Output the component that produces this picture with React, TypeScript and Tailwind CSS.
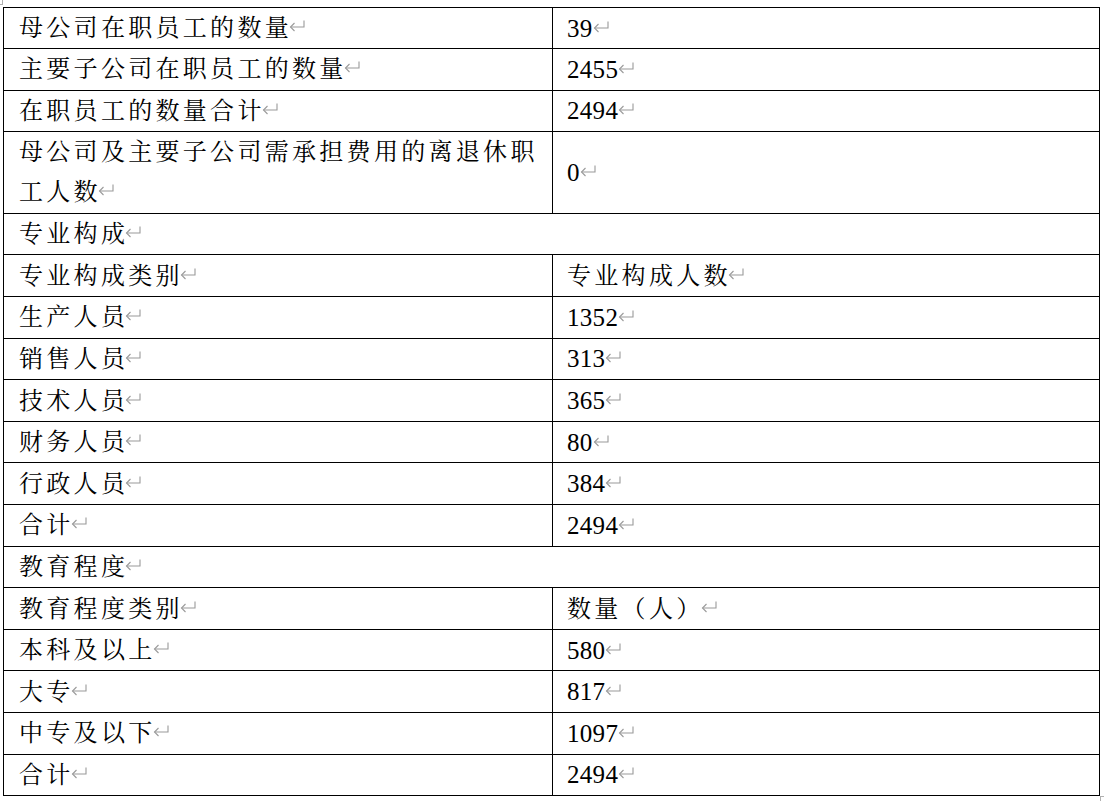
import React from "react";

const Ret = () => (
  <svg width="17" height="12" viewBox="0 0 17 12" className="inline-block ml-[-3px] align-[4px]" fill="none" stroke="#9a9a9a" strokeWidth="1.1">
    <path d="M15 0.5 V7 H1.5" />
    <path d="M5.5 3 L1.5 7 L5.5 11" />
  </svg>
);

const Zh = ({ children }: { children: React.ReactNode }) => (
  <span className="tracking-[3.3px]">{children}</span>
);
const Num = ({ children }: { children: React.ReactNode }) => (
  <span className="text-[25px] tracking-[0.3px] mr-[3px]">{children}</span>
);

type Row = { l: string; r?: string; span?: boolean; rNum?: boolean };

const rows: Row[] = [
  { l: "母公司在职员工的数量", r: "39", rNum: true },
  { l: "主要子公司在职员工的数量", r: "2455", rNum: true },
  { l: "在职员工的数量合计", r: "2494", rNum: true },
  { l: "__double__", r: "0", rNum: true },
  { l: "专业构成", span: true },
  { l: "专业构成类别", r: "专业构成人数" },
  { l: "生产人员", r: "1352", rNum: true },
  { l: "销售人员", r: "313", rNum: true },
  { l: "技术人员", r: "365", rNum: true },
  { l: "财务人员", r: "80", rNum: true },
  { l: "行政人员", r: "384", rNum: true },
  { l: "合计", r: "2494", rNum: true },
  { l: "教育程度", span: true },
  { l: "教育程度类别", r: "数量（人）" },
  { l: "本科及以上", r: "580", rNum: true },
  { l: "大专", r: "817", rNum: true },
  { l: "中专及以下", r: "1097", rNum: true },
  { l: "合计", r: "2494", rNum: true },
];

const cell = "border border-black align-middle text-[24px]";

export default function App() {
  return (
    <div
      className="relative w-[1104px] h-[801px] bg-white text-black pt-[7px] pl-[3px] overflow-hidden"
      style={{ fontFamily: '"Liberation Serif", "Noto Serif CJK SC", "Noto Sans CJK SC", serif' }}
    >
      {/* crop marks */}
      <div className="absolute left-0 top-0 w-[3px] h-[5px] border-r border-b border-[#b0b0b0]" />
      <div className="absolute left-[1100px] top-[796px] w-[4px] h-[5px] border-l border-t border-[#b0b0b0]" />

      <table className="table-fixed border-collapse w-[1097px]">
        <colgroup>
          <col className="w-[549px]" />
          <col />
        </colgroup>
        <tbody>
          {rows.map((row, i) => {
            const h = i < 3 ? "h-[41.3px]" : "h-[41.6px]";
            if (row.l === "__double__") {
              return (
                <tr key={i} className="h-[82px]">
                  <td className={`${cell} pl-[15px] pr-1 leading-[40px]`}>
                    <Zh>母公司及主要子公司需承担费用的离退休职</Zh>
                    <br />
                    <Zh>工人数</Zh>
                    <Ret />
                  </td>
                  <td className={`${cell} pl-[14px] leading-none`}>
                    <Num>0</Num>
                    <Ret />
                  </td>
                </tr>
              );
            }
            if (row.span) {
              return (
                <tr key={i} className={h}>
                  <td colSpan={2} className={`${cell} pl-[15px] leading-none`}>
                    <Zh>{row.l}</Zh>
                    <Ret />
                  </td>
                </tr>
              );
            }
            return (
              <tr key={i} className={h}>
                <td className={`${cell} pl-[15px] leading-none`}>
                  <Zh>{row.l}</Zh>
                  <Ret />
                </td>
                <td className={`${cell} pl-[14px] leading-none`}>
                  {row.rNum ? <Num>{row.r}</Num> : <Zh>{row.r}</Zh>}
                  <Ret />
                </td>
              </tr>
            );
          })}
        </tbody>
      </table>
    </div>
  );
}
